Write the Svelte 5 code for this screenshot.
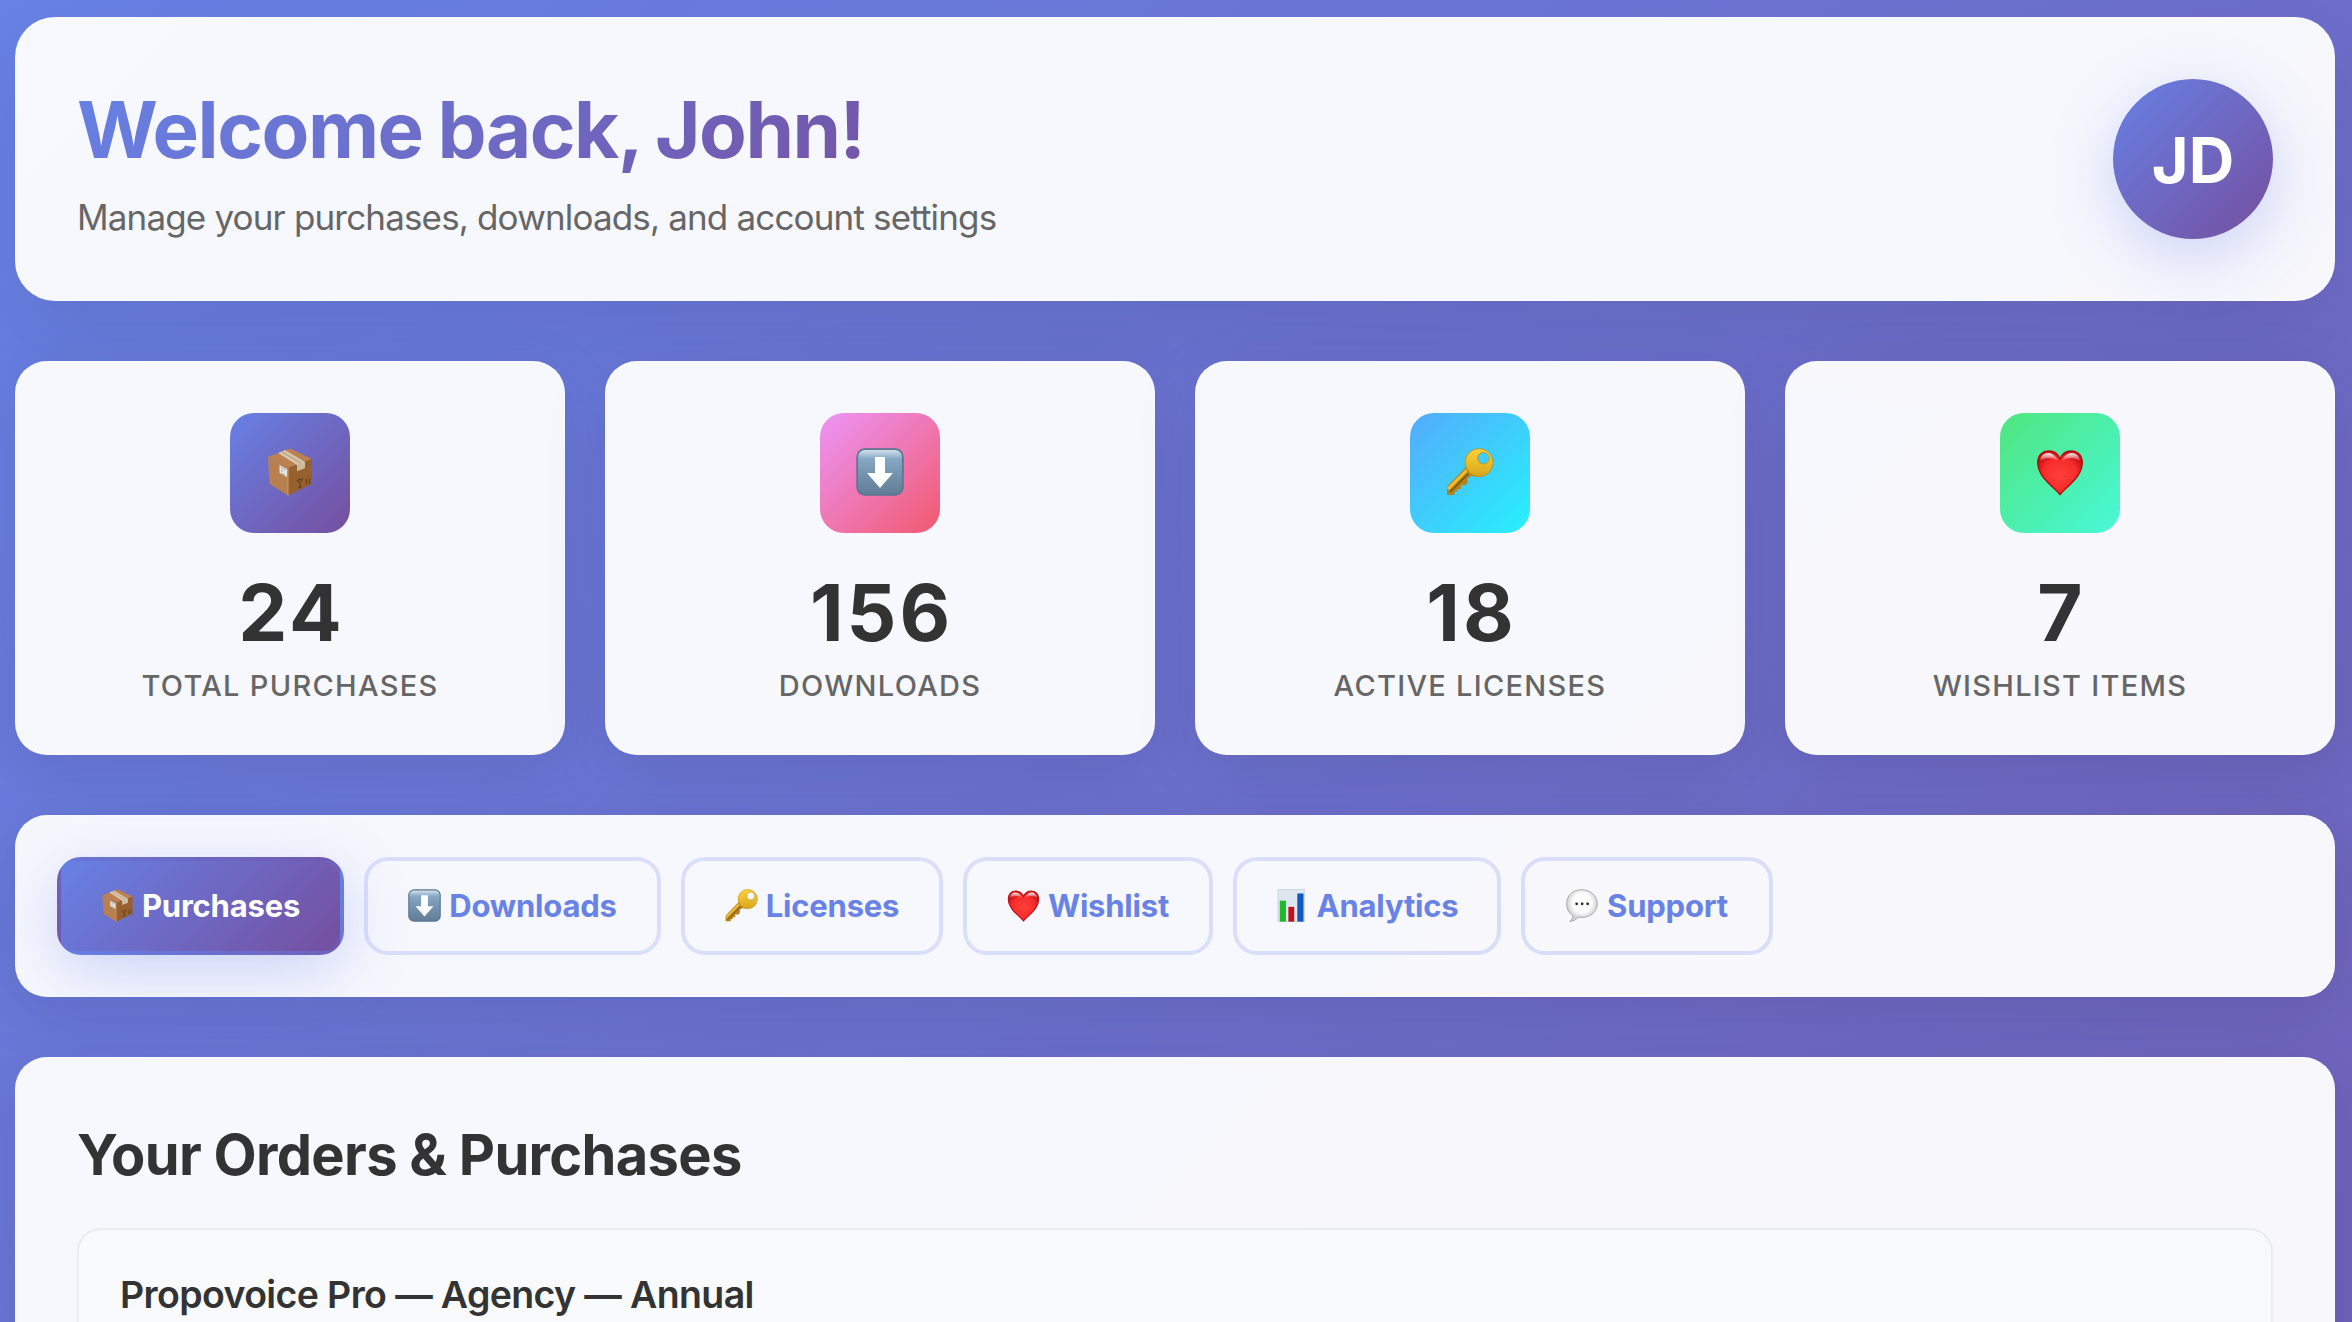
<script>
  const stats = [
    { icon: 'box', value: '24', label: 'Total Purchases', tone: 'violet' },
    { icon: 'down', value: '156', label: 'Downloads', tone: 'pink' },
    { icon: 'key', value: '18', label: 'Active Licenses', tone: 'cyan' },
    { icon: 'heart', value: '7', label: 'Wishlist Items', tone: 'green' }
  ];
  const tabs = [
    { icon: 'box', label: 'Purchases', w: 287 },
    { icon: 'down', label: 'Downloads', w: 297 },
    { icon: 'key', label: 'Licenses', w: 262 },
    { icon: 'heart', label: 'Wishlist', w: 250 },
    { icon: 'chart', label: 'Analytics', w: 268 },
    { icon: 'chat', label: 'Support', w: 252 }
  ];
  let active = $state('Purchases');
</script>

{#snippet glyph(name)}
  <svg class="glyph" viewBox="0 0 48 48" aria-hidden="true">
    {#if name === 'box'}
      <path d="M2 9 24 .5 46 11 22 20z" fill="#bd8150" />
      <path d="M2 9 22 20V47.5L3.500 36z" fill="#b9804f" />
      <path d="M22 20 46 11V36L22 47.500z" fill="#97602f" />
      <path d="M22 20V47.500" stroke="#d19a68" stroke-width="1" />
      <path d="M12 5 19 2 39 14v6l-8 3v-6z" fill="#d9c6aa" />
      <path d="m15.500 3.500 20 12" stroke="#bfa98a" stroke-width="1.500" />
      <path d="m31 17 8-3v6l-8 3z" fill="#cdbb9f" />
      <path d="m13.500 17 7.500 4v8l-7.500-4z" fill="#e4e4e2" />
      <path d="m15 19.500 4.500 2.500M15 22.500l2 1M15 25l4 2" stroke="#a3a5a6" stroke-width="1" />
      <path d="M31 32.500c2 3 5 2 5.500-2l-5.500 2M34 34v5M32 40l4-1.500" stroke="#5b3a1b" stroke-width="1" fill="none" />
      <path d="M40.500 31v6M43.500 30v6" stroke="#6b4522" stroke-width="1.300" />
    {:else if name === 'down'}
      <rect x=".3" y=".3" width="47.400" height="47.400" rx="8.500" fill="#5a7691" />
      <rect x="2" y="2" width="44" height="44" rx="7" fill="url(#steel)" />
      <path d="M19 9h10v16h8L24 40 11 25h8z" fill="#fff" />
    {:else if name === 'key'}
      <path d="M20 19 1 38.500V47H8.500v-3.500h3V41H15v-4l5 .2 2-4-1-2.500 9-6z" fill="#b5831a" />
      <path d="M21.500 21.500 2 41" stroke="#eebd35" stroke-width="3" />
      <path d="M24.500 23.500 4 44" stroke="#735011" stroke-width="1.300" />
      <path fill-rule="evenodd" d="M33 .7a14 14 0 1 0 .1 0zM37.500 4.500a5.700 5.700 0 1 1-.1 0z" fill="url(#gold)" stroke="#bd8b17" stroke-width=".8" />
      <path d="M20.500 20c1 5 4 7.500 9 8" stroke="#c08d15" stroke-width="1.300" fill="none" />
    {:else if name === 'heart'}
      <path d="M24 46.500C17 38 1.800 29 1.800 14.500 1.800 7.500 6.500 3 13 3c5 0 9 3 11 8 2-5 6-8 11-8 6.500 0 11.200 4.500 11.200 11.500C46.200 29 31 38 24 46.500z" fill="url(#ruby)" stroke="#b80e12" stroke-width="1.500" />
      <path d="M4 13c1-10 14-11 18 0-5-4-13-4-18 0zM26 13c4-11 17-10 18 0-5-4-13-4-18 0z" fill="url(#shine)" />
    {:else if name === 'chart'}
      <rect x="2.800" y=".5" width="38.400" height="47" fill="#dde7ef" stroke="#c4ccd4" />
      <rect x="5.500" y="17" width="9" height="30.500" fill="#20b92b" />
      <rect x="18" y="26" width="8.500" height="21.500" fill="#c20f1b" />
      <rect x="31" y="6.500" width="9" height="41" fill="#1159bd" />
    {:else}
      <path d="M22.500 1C9.500 1 1 10 1 21c0 8 3 14 9 17.500 0 4-1.500 6-4.500 8.500 5 0 9.500-2.500 12-6 17 2 28-7 28-20C45.500 10 36 1 22.500 1z" fill="url(#pearl)" stroke="#a5a5a5" stroke-width="1.300" />
      <g fill="#222"><circle cx="15.500" cy="21.500" r="2" /><circle cx="23.500" cy="21.500" r="2" /><circle cx="31.500" cy="21.500" r="2" /></g>
    {/if}
  </svg>
{/snippet}

<svg class="defs" aria-hidden="true">
  <defs>
    <linearGradient id="steel" x2="0" y2="1">
      <stop offset="0" stop-color="#d3e0ea" /><stop offset=".2" stop-color="#86a9c6" />
      <stop offset=".5" stop-color="#7695b0" /><stop offset="1" stop-color="#627d98" />
    </linearGradient>
    <linearGradient id="gold" x2="0" y2="1">
      <stop offset="0" stop-color="#fbd335" /><stop offset="1" stop-color="#d9a51f" />
    </linearGradient>
    <radialGradient id="ruby" cy=".55" r=".55">
      <stop offset="0" stop-color="#ff4038" /><stop offset=".7" stop-color="#f62b2b" /><stop offset="1" stop-color="#c71216" />
    </radialGradient>
    <linearGradient id="shine" x2="0" y2="1">
      <stop offset="0" stop-color="#fff" stop-opacity=".9" /><stop offset="1" stop-color="#fff" stop-opacity=".08" />
    </linearGradient>
    <radialGradient id="pearl" cy=".42">
      <stop offset=".6" stop-color="#fff" /><stop offset="1" stop-color="#cfcfcf" />
    </radialGradient>
  </defs>
</svg>

<div class="page">
  <header class="panel hero">
    <div>
      <h1>Welcome back, John!</h1>
      <p>Manage your purchases, downloads, and account settings</p>
    </div>
    <div class="avatar"><span>JD</span></div>
  </header>

  <section class="stats">
    {#each stats as s}
      <article class="panel stat">
        <div class="tile {s.tone}">{@render glyph(s.icon)}</div>
        <strong>{s.value}</strong>
        <span class="label">{s.label}</span>
      </article>
    {/each}
  </section>

  <nav class="panel tabs">
    {#each tabs as t}
      <button class:active={active === t.label} style:width="{t.w}px" onclick={() => (active = t.label)}>
        {@render glyph(t.icon)}<span>{t.label}</span>
      </button>
    {/each}
  </nav>

  <main class="panel orders">
    <h2>Your Orders &amp; Purchases</h2>
    <article class="order">
      <h3>Propovoice Pro — Agency — Annual</h3>
    </article>
  </main>
</div>

<style>
  :global(body) {
    margin: 0;
    overflow: hidden;
  }
  :global(#app) {
    height: 1322px;
    overflow: hidden;
  }
  .page {
    --brand: linear-gradient(135deg, #6781e5 0%, #754f9f 100%);
    box-sizing: border-box;
    height: 3680px;
    padding: 17px 17px 0 15px;
    display: flex;
    flex-direction: column;
    background: var(--brand);
    font-family: Inter, 'Liberation Sans', sans-serif;
    color: #333;
  }
  h1, h2, h3, p {
    margin: 0;
    white-space: nowrap;
  }
  .defs {
    position: absolute;
    width: 0;
    height: 0;
  }
  .panel {
    box-sizing: border-box;
    border: 2px solid rgba(255, 255, 255, 0.2);
    border-radius: 32px;
    background: rgba(255, 255, 255, 0.95);
    box-shadow: 0 16px 64px rgba(0, 0, 0, 0.1);
  }
  .hero {
    height: 284px;
    padding: 60px;
    border-radius: 40px;
    display: flex;
    align-items: center;
    justify-content: space-between;
    box-shadow: 0 40px 80px rgba(0, 0, 0, 0.08);
  }
  h1 {
    font-size: 78px;
    line-height: 96px;
    font-weight: 700;
    letter-spacing: -1.500px;
    word-spacing: -2px;
    background: var(--brand);
    background-clip: text;
    color: transparent;
  }
  .hero p {
    margin-top: 18px;
    margin-bottom: -2px;
    font-size: 35px;
    line-height: 42px;
    font-weight: 430;
    letter-spacing: -0.840px;
    color: #666;
  }
  .avatar {
    width: 160px;
    height: 160px;
    border-radius: 50%;
    display: grid;
    place-items: center;
    background: var(--brand);
    box-shadow: 0 16px 64px rgba(102, 126, 234, 0.3);
    color: #fff;
    font-size: 63px;
    font-weight: 700;
  }
  .avatar span {
    padding-top: 2px;
  }
  .stats {
    margin-top: 60px;
    display: grid;
    grid-template-columns: repeat(4, 1fr);
    gap: 40px;
  }
  .stat {
    height: 394px;
    padding-top: 50px;
    display: flex;
    flex-direction: column;
    align-items: center;
  }
  .tile {
    width: 120px;
    height: 120px;
    border-radius: 24px;
    display: grid;
    place-items: center;
  }
  .tile .glyph {
    width: 48px;
    height: 48px;
    margin-bottom: 2px;
  }
  .violet { background: var(--brand); }
  .pink { background: linear-gradient(135deg, #ec95f8, #f2596e); }
  .cyan { background: linear-gradient(135deg, #54abfb, #27f1fd); }
  .green { background: linear-gradient(135deg, #50e67e, #48f8d8); }
  .stat strong {
    margin-top: 32px;
    margin-right: -3px;
    font-size: 78px;
    line-height: 96px;
    font-weight: 720;
    letter-spacing: 3px;
  }
  .label {
    margin-top: 7px;
    font-size: 29px;
    line-height: 36px;
    font-weight: 450;
    letter-spacing: 1.300px;
    text-transform: uppercase;
    color: #666;
  }
  .tabs {
    margin-top: 60px;
    height: 182px;
    padding: 40px;
    display: flex;
    gap: 20px;
  }
  button {
    box-sizing: border-box;
    height: 98px;
    padding: 0;
    border: 4px solid rgba(102, 126, 234, 0.2);
    border-radius: 24px;
    background: transparent;
    display: flex;
    align-items: center;
    justify-content: center;
    gap: 8px;
    color: #6882e6;
    font: 650 31px/40px Inter, 'Liberation Sans', sans-serif;
    letter-spacing: -0.200px;
  }
  button .glyph {
    width: 33px;
    height: 33px;
    margin-bottom: 2px;
  }
  button.active {
    background: var(--brand);
    color: #fff;
    box-shadow: 0 16px 64px rgba(102, 126, 234, 0.3);
  }
  .orders {
    margin-top: 60px;
    height: 1400px;
    padding: 60px;
  }
  h2 {
    padding-top: 1px;
    font-size: 56px;
    line-height: 70px;
    font-weight: 700;
    letter-spacing: -0.700px;
  }
  .order {
    margin-top: 38px;
    height: 700px;
    padding: 42px 41px;
    border: 2px solid #ebecef;
    border-radius: 24px;
    background: linear-gradient(135deg, #f8fafb, #f7f9fe);
  }
  h3 {
    font-size: 37.500px;
    line-height: 46px;
    font-weight: 600;
    letter-spacing: -0.630px;
  }
</style>
